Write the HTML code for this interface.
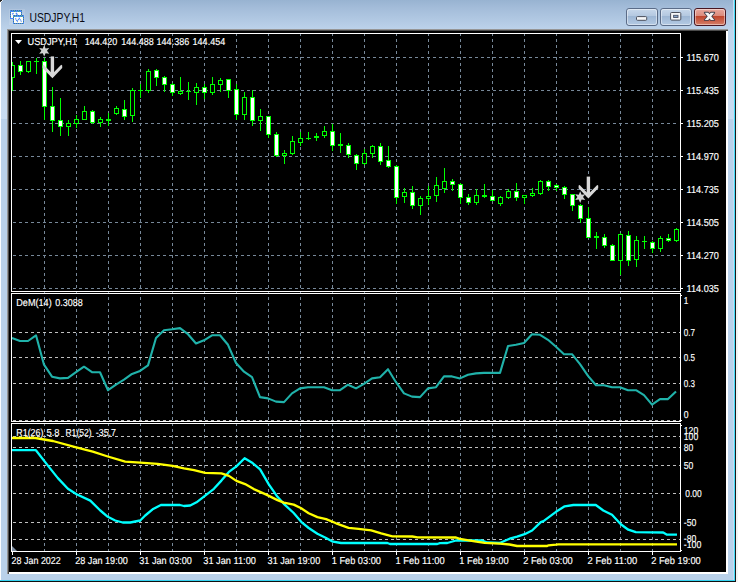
<!DOCTYPE html>
<html><head><meta charset="utf-8"><title>USDJPY,H1</title>
<style>html,body{margin:0;padding:0;background:#000;overflow:hidden}svg{display:block}text{font-family:"Liberation Sans",sans-serif}.t{font-size:10.1px;fill:#fff;stroke:#fff;stroke-width:0.15px;text-rendering:geometricPrecision}</style></head><body>
<svg width="738" height="582" viewBox="0 0 738 582">
<defs><linearGradient id="tb" x1="0" y1="0" x2="0" y2="1"><stop offset="0" stop-color="#98b3d1"/><stop offset="0.25" stop-color="#a3bcd9"/><stop offset="1" stop-color="#bdd3eb"/></linearGradient><linearGradient id="bmin" x1="0" y1="0" x2="0" y2="1"><stop offset="0" stop-color="#c9d9ec"/><stop offset="0.43" stop-color="#b4c8e0"/><stop offset="0.45" stop-color="#9db6d4"/><stop offset="1" stop-color="#b5cbe4"/></linearGradient><linearGradient id="bcl" x1="0" y1="0" x2="0" y2="1"><stop offset="0" stop-color="#e9aaa0"/><stop offset="0.43" stop-color="#db8b7c"/><stop offset="0.45" stop-color="#bf442b"/><stop offset="1" stop-color="#d6826c"/></linearGradient><linearGradient id="rb" x1="0" y1="0" x2="0" y2="1"><stop offset="0" stop-color="#bfd5ec"/><stop offset="1" stop-color="#c9dcf1"/></linearGradient></defs>
<g shape-rendering="crispEdges">
<rect x="0" y="0" width="738" height="582" fill="#b9d1ea"/>
<rect x="0" y="0" width="738" height="30" fill="url(#tb)"/>
<rect x="1" y="30" width="6" height="89" fill="url(#rb)"/>
<rect x="728" y="30" width="5" height="89" fill="url(#rb)"/>
<rect x="0" y="0" width="1" height="580" fill="#fbfdff"/>
<rect x="733" y="0" width="1" height="580" fill="#c6dcf2"/>
<rect x="734" y="0" width="1" height="581" fill="#45dcf8"/>
<rect x="735" y="0" width="1" height="582" fill="#1a1a1a"/>
<rect x="736" y="0" width="2" height="582" fill="#f4f4f4"/>
<rect x="0" y="580" width="735" height="1" fill="#35d2f0"/>
<rect x="0" y="581" width="736" height="1" fill="#101010"/>
<rect x="0" y="0" width="2" height="1" fill="#222"/>
<rect x="0" y="1" width="1" height="1" fill="#3a3a3a"/>
<rect x="1" y="1" width="1" height="1" fill="#e8eef6"/>
<rect x="2" y="0" width="1" height="1" fill="#dfe8f2"/>
<rect x="7" y="29" width="721" height="545" fill="#969696"/>
<rect x="8" y="30" width="720" height="544" fill="#4a4a4a"/>
<rect x="9" y="31" width="719" height="543" fill="#ffffff"/>
<rect x="9" y="31" width="717" height="541" fill="#000000"/>
</g>
<g shape-rendering="crispEdges" fill="none" stroke-width="1">
<line x1="44.5" y1="33" x2="44.5" y2="551" stroke="#778899" stroke-dasharray="3 3"/>
<line x1="76.5" y1="33" x2="76.5" y2="551" stroke="#778899" stroke-dasharray="3 3"/>
<line x1="108.5" y1="33" x2="108.5" y2="551" stroke="#778899" stroke-dasharray="3 3"/>
<line x1="140.5" y1="33" x2="140.5" y2="551" stroke="#778899" stroke-dasharray="3 3"/>
<line x1="172.5" y1="33" x2="172.5" y2="551" stroke="#778899" stroke-dasharray="3 3"/>
<line x1="204.5" y1="33" x2="204.5" y2="551" stroke="#778899" stroke-dasharray="3 3"/>
<line x1="236.5" y1="33" x2="236.5" y2="551" stroke="#778899" stroke-dasharray="3 3"/>
<line x1="268.5" y1="33" x2="268.5" y2="551" stroke="#778899" stroke-dasharray="3 3"/>
<line x1="300.5" y1="33" x2="300.5" y2="551" stroke="#778899" stroke-dasharray="3 3"/>
<line x1="332.5" y1="33" x2="332.5" y2="551" stroke="#778899" stroke-dasharray="3 3"/>
<line x1="364.5" y1="33" x2="364.5" y2="551" stroke="#778899" stroke-dasharray="3 3"/>
<line x1="396.5" y1="33" x2="396.5" y2="551" stroke="#778899" stroke-dasharray="3 3"/>
<line x1="428.5" y1="33" x2="428.5" y2="551" stroke="#778899" stroke-dasharray="3 3"/>
<line x1="460.5" y1="33" x2="460.5" y2="551" stroke="#778899" stroke-dasharray="3 3"/>
<line x1="492.5" y1="33" x2="492.5" y2="551" stroke="#778899" stroke-dasharray="3 3"/>
<line x1="524.5" y1="33" x2="524.5" y2="551" stroke="#778899" stroke-dasharray="3 3"/>
<line x1="556.5" y1="33" x2="556.5" y2="551" stroke="#778899" stroke-dasharray="3 3"/>
<line x1="588.5" y1="33" x2="588.5" y2="551" stroke="#778899" stroke-dasharray="3 3"/>
<line x1="620.5" y1="33" x2="620.5" y2="551" stroke="#778899" stroke-dasharray="3 3"/>
<line x1="652.5" y1="33" x2="652.5" y2="551" stroke="#778899" stroke-dasharray="3 3"/>
<line x1="13" y1="57.5" x2="679" y2="57.5" stroke="#778899" stroke-dasharray="3 3"/>
<line x1="13" y1="90.5" x2="679" y2="90.5" stroke="#778899" stroke-dasharray="3 3"/>
<line x1="13" y1="123.5" x2="679" y2="123.5" stroke="#778899" stroke-dasharray="3 3"/>
<line x1="13" y1="156.5" x2="679" y2="156.5" stroke="#778899" stroke-dasharray="3 3"/>
<line x1="13" y1="189.5" x2="679" y2="189.5" stroke="#778899" stroke-dasharray="3 3"/>
<line x1="13" y1="222.5" x2="679" y2="222.5" stroke="#778899" stroke-dasharray="3 3"/>
<line x1="13" y1="255.5" x2="679" y2="255.5" stroke="#778899" stroke-dasharray="3 3"/>
<line x1="13" y1="288.5" x2="679" y2="288.5" stroke="#778899" stroke-dasharray="3 3"/>
<line x1="13" y1="332.5" x2="680" y2="332.5" stroke="#c0c0c0" stroke-dasharray="3 3"/>
<line x1="13" y1="357.5" x2="680" y2="357.5" stroke="#c0c0c0" stroke-dasharray="3 3"/>
<line x1="13" y1="383.5" x2="680" y2="383.5" stroke="#c0c0c0" stroke-dasharray="3 3"/>
<line x1="13" y1="420.5" x2="680" y2="420.5" stroke="#c0c0c0" stroke-dasharray="3 3"/>
<line x1="13" y1="436.5" x2="680" y2="436.5" stroke="#c0c0c0" stroke-dasharray="3 3"/>
<line x1="13" y1="447.5" x2="680" y2="447.5" stroke="#c0c0c0" stroke-dasharray="3 3"/>
<line x1="13" y1="465.5" x2="680" y2="465.5" stroke="#c0c0c0" stroke-dasharray="3 3"/>
<line x1="13" y1="493.5" x2="680" y2="493.5" stroke="#c0c0c0" stroke-dasharray="3 3"/>
<line x1="13" y1="522.5" x2="680" y2="522.5" stroke="#c0c0c0" stroke-dasharray="3 3"/>
<line x1="13" y1="539.5" x2="680" y2="539.5" stroke="#c0c0c0" stroke-dasharray="3 3"/>
</g>
<g shape-rendering="crispEdges">
<clipPath id="cm"><rect x="12" y="34" width="668" height="257"/></clipPath>
<g clip-path="url(#cm)">
<rect x="12" y="62" width="1" height="29" fill="#00ff00"/>
<rect x="10" y="65" width="5" height="13" fill="#00ff00"/>
<rect x="11" y="66" width="3" height="11" fill="#000"/>
<rect x="20" y="61" width="1" height="14" fill="#00ff00"/>
<rect x="18" y="65" width="5" height="7" fill="#00ff00"/>
<rect x="19" y="66" width="3" height="5" fill="#fff"/>
<rect x="28" y="61" width="1" height="12" fill="#00ff00"/>
<rect x="26" y="61" width="5" height="11" fill="#00ff00"/>
<rect x="27" y="62" width="3" height="9" fill="#000"/>
<rect x="36" y="58" width="1" height="16" fill="#00ff00"/>
<rect x="34" y="61" width="5" height="1" fill="#00ff00"/>
<rect x="44" y="58" width="1" height="62" fill="#00ff00"/>
<rect x="42" y="61" width="5" height="46" fill="#00ff00"/>
<rect x="43" y="62" width="3" height="44" fill="#fff"/>
<rect x="52" y="87" width="1" height="45" fill="#00ff00"/>
<rect x="50" y="106" width="5" height="15" fill="#00ff00"/>
<rect x="51" y="107" width="3" height="13" fill="#fff"/>
<rect x="60" y="98" width="1" height="38" fill="#00ff00"/>
<rect x="58" y="120" width="5" height="7" fill="#00ff00"/>
<rect x="59" y="121" width="3" height="5" fill="#fff"/>
<rect x="68" y="120" width="1" height="16" fill="#00ff00"/>
<rect x="66" y="123" width="5" height="4" fill="#00ff00"/>
<rect x="67" y="124" width="3" height="2" fill="#000"/>
<rect x="76" y="115" width="1" height="13" fill="#00ff00"/>
<rect x="74" y="119" width="5" height="5" fill="#00ff00"/>
<rect x="75" y="120" width="3" height="3" fill="#000"/>
<rect x="84" y="106" width="1" height="14" fill="#00ff00"/>
<rect x="82" y="111" width="5" height="9" fill="#00ff00"/>
<rect x="83" y="112" width="3" height="7" fill="#000"/>
<rect x="92" y="110" width="1" height="14" fill="#00ff00"/>
<rect x="90" y="111" width="5" height="12" fill="#00ff00"/>
<rect x="91" y="112" width="3" height="10" fill="#fff"/>
<rect x="100" y="117" width="1" height="10" fill="#00ff00"/>
<rect x="98" y="119" width="5" height="4" fill="#00ff00"/>
<rect x="99" y="120" width="3" height="2" fill="#000"/>
<rect x="108" y="113" width="1" height="13" fill="#00ff00"/>
<rect x="106" y="119" width="5" height="2" fill="#00ff00"/>
<rect x="116" y="106" width="1" height="9" fill="#00ff00"/>
<rect x="114" y="108" width="5" height="6" fill="#00ff00"/>
<rect x="115" y="109" width="3" height="4" fill="#000"/>
<rect x="124" y="100" width="1" height="20" fill="#00ff00"/>
<rect x="122" y="109" width="5" height="8" fill="#00ff00"/>
<rect x="123" y="110" width="3" height="6" fill="#fff"/>
<rect x="132" y="88" width="1" height="34" fill="#00ff00"/>
<rect x="130" y="90" width="5" height="26" fill="#00ff00"/>
<rect x="131" y="91" width="3" height="24" fill="#000"/>
<rect x="140" y="84" width="1" height="14" fill="#00ff00"/>
<rect x="138" y="90" width="5" height="1" fill="#00ff00"/>
<rect x="148" y="69" width="1" height="24" fill="#00ff00"/>
<rect x="146" y="71" width="5" height="20" fill="#00ff00"/>
<rect x="147" y="72" width="3" height="18" fill="#000"/>
<rect x="156" y="69" width="1" height="17" fill="#00ff00"/>
<rect x="154" y="70" width="5" height="8" fill="#00ff00"/>
<rect x="155" y="71" width="3" height="6" fill="#fff"/>
<rect x="164" y="76" width="1" height="16" fill="#00ff00"/>
<rect x="162" y="77" width="5" height="8" fill="#00ff00"/>
<rect x="163" y="78" width="3" height="6" fill="#fff"/>
<rect x="172" y="83" width="1" height="13" fill="#00ff00"/>
<rect x="170" y="84" width="5" height="9" fill="#00ff00"/>
<rect x="171" y="85" width="3" height="7" fill="#fff"/>
<rect x="180" y="77" width="1" height="18" fill="#00ff00"/>
<rect x="178" y="91" width="5" height="3" fill="#00ff00"/>
<rect x="179" y="92" width="3" height="1" fill="#000"/>
<rect x="188" y="82" width="1" height="18" fill="#00ff00"/>
<rect x="186" y="91" width="5" height="1" fill="#00ff00"/>
<rect x="196" y="83" width="1" height="22" fill="#00ff00"/>
<rect x="194" y="87" width="5" height="6" fill="#00ff00"/>
<rect x="195" y="88" width="3" height="4" fill="#000"/>
<rect x="204" y="84" width="1" height="15" fill="#00ff00"/>
<rect x="202" y="87" width="5" height="6" fill="#00ff00"/>
<rect x="203" y="88" width="3" height="4" fill="#fff"/>
<rect x="212" y="77" width="1" height="18" fill="#00ff00"/>
<rect x="210" y="84" width="5" height="9" fill="#00ff00"/>
<rect x="211" y="85" width="3" height="7" fill="#000"/>
<rect x="220" y="78" width="1" height="14" fill="#00ff00"/>
<rect x="218" y="80" width="5" height="5" fill="#00ff00"/>
<rect x="219" y="81" width="3" height="3" fill="#000"/>
<rect x="228" y="79" width="1" height="19" fill="#00ff00"/>
<rect x="226" y="79" width="5" height="12" fill="#00ff00"/>
<rect x="227" y="80" width="3" height="10" fill="#fff"/>
<rect x="236" y="84" width="1" height="36" fill="#00ff00"/>
<rect x="234" y="89" width="5" height="26" fill="#00ff00"/>
<rect x="235" y="90" width="3" height="24" fill="#fff"/>
<rect x="244" y="92" width="1" height="28" fill="#00ff00"/>
<rect x="242" y="97" width="5" height="18" fill="#00ff00"/>
<rect x="243" y="98" width="3" height="16" fill="#000"/>
<rect x="252" y="90" width="1" height="36" fill="#00ff00"/>
<rect x="250" y="97" width="5" height="24" fill="#00ff00"/>
<rect x="251" y="98" width="3" height="22" fill="#fff"/>
<rect x="260" y="109" width="1" height="22" fill="#00ff00"/>
<rect x="258" y="116" width="5" height="5" fill="#00ff00"/>
<rect x="259" y="117" width="3" height="3" fill="#000"/>
<rect x="268" y="116" width="1" height="22" fill="#00ff00"/>
<rect x="266" y="116" width="5" height="19" fill="#00ff00"/>
<rect x="267" y="117" width="3" height="17" fill="#fff"/>
<rect x="276" y="132" width="1" height="25" fill="#00ff00"/>
<rect x="274" y="134" width="5" height="22" fill="#00ff00"/>
<rect x="275" y="135" width="3" height="20" fill="#fff"/>
<rect x="284" y="150" width="1" height="14" fill="#00ff00"/>
<rect x="282" y="153" width="5" height="3" fill="#00ff00"/>
<rect x="283" y="154" width="3" height="1" fill="#000"/>
<rect x="292" y="136" width="1" height="19" fill="#00ff00"/>
<rect x="290" y="141" width="5" height="13" fill="#00ff00"/>
<rect x="291" y="142" width="3" height="11" fill="#000"/>
<rect x="300" y="132" width="1" height="14" fill="#00ff00"/>
<rect x="298" y="138" width="5" height="5" fill="#00ff00"/>
<rect x="299" y="139" width="3" height="3" fill="#000"/>
<rect x="308" y="132" width="1" height="8" fill="#00ff00"/>
<rect x="306" y="138" width="5" height="1" fill="#00ff00"/>
<rect x="316" y="133" width="1" height="8" fill="#00ff00"/>
<rect x="314" y="136" width="5" height="2" fill="#00ff00"/>
<rect x="324" y="126" width="1" height="12" fill="#00ff00"/>
<rect x="322" y="131" width="5" height="5" fill="#00ff00"/>
<rect x="323" y="132" width="3" height="3" fill="#000"/>
<rect x="332" y="124" width="1" height="27" fill="#00ff00"/>
<rect x="330" y="131" width="5" height="15" fill="#00ff00"/>
<rect x="331" y="132" width="3" height="13" fill="#fff"/>
<rect x="340" y="133" width="1" height="20" fill="#00ff00"/>
<rect x="338" y="144" width="5" height="2" fill="#00ff00"/>
<rect x="348" y="143" width="1" height="15" fill="#00ff00"/>
<rect x="346" y="145" width="5" height="10" fill="#00ff00"/>
<rect x="347" y="146" width="3" height="8" fill="#fff"/>
<rect x="356" y="154" width="1" height="16" fill="#00ff00"/>
<rect x="354" y="155" width="5" height="9" fill="#00ff00"/>
<rect x="355" y="156" width="3" height="7" fill="#fff"/>
<rect x="364" y="149" width="1" height="16" fill="#00ff00"/>
<rect x="362" y="153" width="5" height="11" fill="#00ff00"/>
<rect x="363" y="154" width="3" height="9" fill="#000"/>
<rect x="372" y="145" width="1" height="13" fill="#00ff00"/>
<rect x="370" y="146" width="5" height="8" fill="#00ff00"/>
<rect x="371" y="147" width="3" height="6" fill="#000"/>
<rect x="380" y="143" width="1" height="22" fill="#00ff00"/>
<rect x="378" y="146" width="5" height="16" fill="#00ff00"/>
<rect x="379" y="147" width="3" height="14" fill="#fff"/>
<rect x="388" y="146" width="1" height="22" fill="#00ff00"/>
<rect x="386" y="160" width="5" height="7" fill="#00ff00"/>
<rect x="387" y="161" width="3" height="5" fill="#fff"/>
<rect x="396" y="165" width="1" height="39" fill="#00ff00"/>
<rect x="394" y="166" width="5" height="32" fill="#00ff00"/>
<rect x="395" y="167" width="3" height="30" fill="#fff"/>
<rect x="404" y="188" width="1" height="15" fill="#00ff00"/>
<rect x="402" y="192" width="5" height="5" fill="#00ff00"/>
<rect x="403" y="193" width="3" height="3" fill="#000"/>
<rect x="412" y="186" width="1" height="23" fill="#00ff00"/>
<rect x="410" y="192" width="5" height="14" fill="#00ff00"/>
<rect x="411" y="193" width="3" height="12" fill="#fff"/>
<rect x="420" y="196" width="1" height="19" fill="#00ff00"/>
<rect x="418" y="198" width="5" height="8" fill="#00ff00"/>
<rect x="419" y="199" width="3" height="6" fill="#000"/>
<rect x="428" y="186" width="1" height="19" fill="#00ff00"/>
<rect x="426" y="196" width="5" height="3" fill="#00ff00"/>
<rect x="427" y="197" width="3" height="1" fill="#000"/>
<rect x="436" y="177" width="1" height="25" fill="#00ff00"/>
<rect x="434" y="185" width="5" height="11" fill="#00ff00"/>
<rect x="435" y="186" width="3" height="9" fill="#000"/>
<rect x="444" y="168" width="1" height="25" fill="#00ff00"/>
<rect x="442" y="181" width="5" height="8" fill="#00ff00"/>
<rect x="443" y="182" width="3" height="6" fill="#000"/>
<rect x="452" y="179" width="1" height="12" fill="#00ff00"/>
<rect x="450" y="181" width="5" height="4" fill="#00ff00"/>
<rect x="451" y="182" width="3" height="2" fill="#fff"/>
<rect x="460" y="183" width="1" height="21" fill="#00ff00"/>
<rect x="458" y="184" width="5" height="14" fill="#00ff00"/>
<rect x="459" y="185" width="3" height="12" fill="#fff"/>
<rect x="468" y="194" width="1" height="11" fill="#00ff00"/>
<rect x="466" y="197" width="5" height="6" fill="#00ff00"/>
<rect x="467" y="198" width="3" height="4" fill="#fff"/>
<rect x="476" y="189" width="1" height="16" fill="#00ff00"/>
<rect x="474" y="195" width="5" height="8" fill="#00ff00"/>
<rect x="475" y="196" width="3" height="6" fill="#000"/>
<rect x="484" y="184" width="1" height="14" fill="#00ff00"/>
<rect x="482" y="195" width="5" height="2" fill="#00ff00"/>
<rect x="492" y="190" width="1" height="11" fill="#00ff00"/>
<rect x="490" y="196" width="5" height="5" fill="#00ff00"/>
<rect x="491" y="197" width="3" height="3" fill="#fff"/>
<rect x="500" y="196" width="1" height="10" fill="#00ff00"/>
<rect x="498" y="197" width="5" height="7" fill="#00ff00"/>
<rect x="499" y="198" width="3" height="5" fill="#000"/>
<rect x="508" y="189" width="1" height="10" fill="#00ff00"/>
<rect x="506" y="191" width="5" height="7" fill="#00ff00"/>
<rect x="507" y="192" width="3" height="5" fill="#000"/>
<rect x="516" y="183" width="1" height="18" fill="#00ff00"/>
<rect x="514" y="191" width="5" height="7" fill="#00ff00"/>
<rect x="515" y="192" width="3" height="5" fill="#fff"/>
<rect x="524" y="195" width="1" height="9" fill="#00ff00"/>
<rect x="522" y="195" width="5" height="3" fill="#00ff00"/>
<rect x="523" y="196" width="3" height="1" fill="#000"/>
<rect x="532" y="188" width="1" height="9" fill="#00ff00"/>
<rect x="530" y="193" width="5" height="3" fill="#00ff00"/>
<rect x="531" y="194" width="3" height="1" fill="#000"/>
<rect x="540" y="180" width="1" height="15" fill="#00ff00"/>
<rect x="538" y="181" width="5" height="13" fill="#00ff00"/>
<rect x="539" y="182" width="3" height="11" fill="#000"/>
<rect x="548" y="180" width="1" height="11" fill="#00ff00"/>
<rect x="546" y="181" width="5" height="6" fill="#00ff00"/>
<rect x="547" y="182" width="3" height="4" fill="#fff"/>
<rect x="556" y="184" width="1" height="7" fill="#00ff00"/>
<rect x="554" y="185" width="5" height="3" fill="#00ff00"/>
<rect x="555" y="186" width="3" height="1" fill="#fff"/>
<rect x="564" y="186" width="1" height="13" fill="#00ff00"/>
<rect x="562" y="187" width="5" height="8" fill="#00ff00"/>
<rect x="563" y="188" width="3" height="6" fill="#fff"/>
<rect x="572" y="194" width="1" height="17" fill="#00ff00"/>
<rect x="570" y="194" width="5" height="12" fill="#00ff00"/>
<rect x="571" y="195" width="3" height="10" fill="#fff"/>
<rect x="580" y="204" width="1" height="19" fill="#00ff00"/>
<rect x="578" y="205" width="5" height="14" fill="#00ff00"/>
<rect x="579" y="206" width="3" height="12" fill="#fff"/>
<rect x="588" y="207" width="1" height="31" fill="#00ff00"/>
<rect x="586" y="218" width="5" height="20" fill="#00ff00"/>
<rect x="587" y="219" width="3" height="18" fill="#fff"/>
<rect x="596" y="232" width="1" height="17" fill="#00ff00"/>
<rect x="594" y="236" width="5" height="2" fill="#00ff00"/>
<rect x="604" y="234" width="1" height="14" fill="#00ff00"/>
<rect x="602" y="237" width="5" height="9" fill="#00ff00"/>
<rect x="603" y="238" width="3" height="7" fill="#fff"/>
<rect x="612" y="244" width="1" height="17" fill="#00ff00"/>
<rect x="610" y="245" width="5" height="16" fill="#00ff00"/>
<rect x="611" y="246" width="3" height="14" fill="#fff"/>
<rect x="620" y="233" width="1" height="42" fill="#00ff00"/>
<rect x="618" y="234" width="5" height="27" fill="#00ff00"/>
<rect x="619" y="235" width="3" height="25" fill="#000"/>
<rect x="628" y="231" width="1" height="35" fill="#00ff00"/>
<rect x="626" y="235" width="5" height="26" fill="#00ff00"/>
<rect x="627" y="236" width="3" height="24" fill="#fff"/>
<rect x="636" y="236" width="1" height="31" fill="#00ff00"/>
<rect x="634" y="240" width="5" height="20" fill="#00ff00"/>
<rect x="635" y="241" width="3" height="18" fill="#000"/>
<rect x="644" y="236" width="1" height="13" fill="#00ff00"/>
<rect x="642" y="241" width="5" height="1" fill="#00ff00"/>
<rect x="652" y="241" width="1" height="12" fill="#00ff00"/>
<rect x="650" y="242" width="5" height="7" fill="#00ff00"/>
<rect x="651" y="243" width="3" height="5" fill="#fff"/>
<rect x="660" y="236" width="1" height="16" fill="#00ff00"/>
<rect x="658" y="238" width="5" height="11" fill="#00ff00"/>
<rect x="659" y="239" width="3" height="9" fill="#000"/>
<rect x="668" y="234" width="1" height="8" fill="#00ff00"/>
<rect x="666" y="238" width="5" height="3" fill="#00ff00"/>
<rect x="667" y="239" width="3" height="1" fill="#fff"/>
<rect x="676" y="228" width="1" height="14" fill="#00ff00"/>
<rect x="674" y="229" width="5" height="12" fill="#00ff00"/>
<rect x="675" y="230" width="3" height="10" fill="#000"/>
</g></g>
<line x1="52.4" y1="56.4" x2="52.4" y2="76.3" stroke="#d8d8d8" stroke-width="3.4"/><polygon points="42.60,65.40 43.60,64.80 52.40,73.70 61.20,64.80 62.20,65.40 62.20,68.00 52.40,78.30 42.60,68.00" fill="#d8d8d8"/>
<line x1="588.4" y1="176.6" x2="588.4" y2="196.5" stroke="#d8d8d8" stroke-width="3.4"/><polygon points="578.60,185.60 579.60,185.00 588.40,193.90 597.20,185.00 598.20,185.60 598.20,188.20 588.40,198.50 578.60,188.20" fill="#d8d8d8"/>
<polygon points="44.20,45.00 45.60,48.38 49.22,47.90 47.00,50.80 49.22,53.70 45.60,53.22 44.20,56.60 42.80,53.22 39.18,53.70 41.40,50.80 39.18,47.90 42.80,48.38" fill="#d0d0d0"/>
<polygon points="580.20,191.30 581.60,194.68 585.22,194.20 583.00,197.10 585.22,200.00 581.60,199.52 580.20,202.90 578.80,199.52 575.18,200.00 577.40,197.10 575.18,194.20 578.80,194.68" fill="#d0d0d0"/>
<polyline points="12,338.0 20,341.0 28,341.0 36,335.29999999999995 44,364.7 52,376.7 60,378.4 68,377.9 76,372.2 84,366.7 92,372.2 100,372.2 108,390.2 116,384.7 124,379.7 132,373.9 140,370.9 148,365.4 156,338.0 164,330.29999999999995 172,329.29999999999995 180,328.09999999999997 188,334.2 196,343.5 204,340.29999999999995 212,335.29999999999995 220,335.29999999999995 228,344.79999999999995 236,363.0 244,371.7 252,377.2 260,397.09999999999997 268,398.4 276,401.59999999999997 284,402.09999999999997 292,393.4 300,388.4 308,387.2 316,387.2 324,387.2 332,390.2 340,390.2 348,384.7 356,388.4 364,383.79999999999995 372,378.4 380,377.2 388,369.2 396,382.2 404,393.4 412,396.59999999999997 420,397.09999999999997 428,388.4 436,387.2 444,376.4 452,376.4 460,378.4 468,374.7 476,373.4 484,372.9 492,372.9 500,372.9 508,346.0 516,344.79999999999995 524,343.0 532,334.29999999999995 540,334.79999999999995 548,339.79999999999995 556,346.79999999999995 564,354.2 572,354.2 580,364.2 588,375.9 596,385.2 604,385.2 612,387.2 620,387.2 628,390.2 636,390.2 644,395.09999999999997 652,404.59999999999997 660,399.09999999999997 668,399.09999999999997 676,391.4" fill="none" stroke="#20b2aa" stroke-width="2.1" stroke-linejoin="round"/>
<polyline points="12,450.2 35.9,450.2 47.9,465.6 57.9,478.1 67.9,488.8 76.6,494.3 90.3,500.6 100.3,510.5 107.8,516.8 115.2,520.5 122.7,522.5 130.2,522.5 140.2,520.5 145.2,515.5 152.6,509.3 161.4,504.8 180,505 184,506 190.2,505.5 196.5,502.3 205.2,495.6 213.9,488.8 221.4,480.6 228.9,471.9 236.4,466.4 244.6,458.2 252.6,463.1 260.1,469.4 268.8,484.3 277.5,496.8 283.8,503.8 293.7,513 301.2,521.8 308.7,528 317.4,533.7 326.1,538 332.9,541.7 341.1,543 387.4,543 390,544 437.3,544 439.8,543.2 447.3,543 456,540.5 482.2,540.5 487.2,542.5 499.7,543 509.6,538.7 517.1,536.7 524.6,534.2 532.1,530.5 540.8,522.2 543.5,521.2 556,511.8 564.7,506.3 573.4,505 595.8,505 603.3,510.5 612,514.8 620.8,524.2 628.3,529.7 635.8,532.2 663.2,532.5 667,534.7 677,534.7" fill="none" stroke="#00ffff" stroke-width="2.3" stroke-linejoin="round"/>
<polyline points="12,438.0 35.4,438.0 52.9,441.0 75.3,447.2 92.8,451.7 107.8,456.5 125.2,461.7 140.2,462.7 157.6,463.90000000000003 172.6,465.90000000000003 184,468.40000000000003 194,470.2 205.2,472.90000000000003 221.4,473.40000000000003 228.9,475.90000000000003 236.4,480.90000000000003 245.1,484.1 253.8,489.1 266.3,494.6 277.5,500.1 283.8,502.6 293.7,504.6 301.2,508.3 308.7,513.3 317.4,517.0999999999999 326.1,519.0999999999999 336.1,523.3 348.6,527.8 358.6,528.8 371.2,530.3 381.2,533.3 392.4,536.3 412.4,536.5 417.4,537.3 456,537.5 459.8,538.8 474.7,541.3 484.7,542.8 499.7,543.6999999999999 509.6,544.5 517.1,546.0 547.2,546.0 548.5,545.3 556,544.6999999999999 558.4,544.3 677,544.3" fill="none" stroke="#ffff00" stroke-width="2.3" stroke-linejoin="round"/>
<g shape-rendering="crispEdges" fill="none" stroke="#fff" stroke-width="1">
<rect x="11.5" y="33.5" width="669" height="258"/>
<rect x="11.5" y="293.5" width="669" height="128"/>
<rect x="11.5" y="423.5" width="669" height="128"/>
</g>
<polygon points="12,546 12,551 17,551" fill="#7f8fa3"/>
<g shape-rendering="crispEdges" fill="#fff">
<rect x="681" y="57" width="2" height="1" fill="#fff"/>
<rect x="681" y="90" width="2" height="1" fill="#fff"/>
<rect x="681" y="123" width="2" height="1" fill="#fff"/>
<rect x="681" y="156" width="2" height="1" fill="#fff"/>
<rect x="681" y="189" width="2" height="1" fill="#fff"/>
<rect x="681" y="222" width="2" height="1" fill="#fff"/>
<rect x="681" y="255" width="2" height="1" fill="#fff"/>
<rect x="681" y="288" width="2" height="1" fill="#fff"/>
<rect x="12" y="552" width="1" height="3" fill="#fff"/>
<rect x="76" y="552" width="1" height="3" fill="#fff"/>
<rect x="140" y="552" width="1" height="3" fill="#fff"/>
<rect x="204" y="552" width="1" height="3" fill="#fff"/>
<rect x="268" y="552" width="1" height="3" fill="#fff"/>
<rect x="332" y="552" width="1" height="3" fill="#fff"/>
<rect x="396" y="552" width="1" height="3" fill="#fff"/>
<rect x="460" y="552" width="1" height="3" fill="#fff"/>
<rect x="524" y="552" width="1" height="3" fill="#fff"/>
<rect x="588" y="552" width="1" height="3" fill="#fff"/>
<rect x="652" y="552" width="1" height="3" fill="#fff"/>
<rect x="681" y="295" width="1" height="1" fill="#fff"/>
<rect x="681" y="420" width="1" height="1" fill="#fff"/>
<rect x="681" y="425" width="1" height="1" fill="#fff"/>
<rect x="681" y="550" width="1" height="1" fill="#fff"/>
</g>
<text class="t" x="686.5" y="61" textLength="32.4" lengthAdjust="spacingAndGlyphs">115.670</text>
<text class="t" x="686.5" y="94" textLength="32.4" lengthAdjust="spacingAndGlyphs">115.435</text>
<text class="t" x="686.5" y="127" textLength="32.4" lengthAdjust="spacingAndGlyphs">115.205</text>
<text class="t" x="686.5" y="160" textLength="32.4" lengthAdjust="spacingAndGlyphs">114.970</text>
<text class="t" x="686.5" y="193" textLength="32.4" lengthAdjust="spacingAndGlyphs">114.735</text>
<text class="t" x="686.5" y="226" textLength="32.4" lengthAdjust="spacingAndGlyphs">114.505</text>
<text class="t" x="686.5" y="259" textLength="32.4" lengthAdjust="spacingAndGlyphs">114.270</text>
<text class="t" x="686.5" y="292" textLength="32.4" lengthAdjust="spacingAndGlyphs">114.035</text>
<text class="t" x="683.8" y="303.6" textLength="4.6" lengthAdjust="spacingAndGlyphs">1</text>
<text class="t" x="683.8" y="336" textLength="11.2" lengthAdjust="spacingAndGlyphs">0.7</text>
<text class="t" x="683.8" y="361" textLength="11.2" lengthAdjust="spacingAndGlyphs">0.5</text>
<text class="t" x="683.8" y="386.6" textLength="11.2" lengthAdjust="spacingAndGlyphs">0.3</text>
<text class="t" x="683.8" y="418" textLength="4.8" lengthAdjust="spacingAndGlyphs">0</text>
<text class="t" x="683.8" y="434" textLength="14.4" lengthAdjust="spacingAndGlyphs">120</text>
<text class="t" x="683.8" y="440" textLength="14.4" lengthAdjust="spacingAndGlyphs">100</text>
<text class="t" x="683.8" y="451" textLength="9.6" lengthAdjust="spacingAndGlyphs">80</text>
<text class="t" x="683.8" y="469" textLength="9.6" lengthAdjust="spacingAndGlyphs">50</text>
<text class="t" x="685.3" y="497" textLength="16.4" lengthAdjust="spacingAndGlyphs">0.00</text>
<text class="t" x="683.8" y="526" textLength="12.6" lengthAdjust="spacingAndGlyphs">-50</text>
<text class="t" x="683.8" y="542.4" textLength="12.6" lengthAdjust="spacingAndGlyphs">-80</text>
<text class="t" x="683.8" y="548.2" textLength="17.6" lengthAdjust="spacingAndGlyphs">-100</text>
<text class="t" x="11.6" y="564" textLength="49.2" lengthAdjust="spacingAndGlyphs">28 Jan 2022</text>
<text class="t" x="75.2" y="564" textLength="52.6" lengthAdjust="spacingAndGlyphs">28 Jan 19:00</text>
<text class="t" x="139.3" y="564" textLength="52.6" lengthAdjust="spacingAndGlyphs">31 Jan 03:00</text>
<text class="t" x="203.3" y="564" textLength="52.6" lengthAdjust="spacingAndGlyphs">31 Jan 11:00</text>
<text class="t" x="267.6" y="564" textLength="52.6" lengthAdjust="spacingAndGlyphs">31 Jan 19:00</text>
<text class="t" x="331.7" y="564" textLength="49.3" lengthAdjust="spacingAndGlyphs">1 Feb 03:00</text>
<text class="t" x="395.4" y="564" textLength="49.3" lengthAdjust="spacingAndGlyphs">1 Feb 11:00</text>
<text class="t" x="459.3" y="564" textLength="49.3" lengthAdjust="spacingAndGlyphs">1 Feb 19:00</text>
<text class="t" x="523.2" y="564" textLength="49.6" lengthAdjust="spacingAndGlyphs">2 Feb 03:00</text>
<text class="t" x="587.6" y="564" textLength="49.6" lengthAdjust="spacingAndGlyphs">2 Feb 11:00</text>
<text class="t" x="651.2" y="564" textLength="49.6" lengthAdjust="spacingAndGlyphs">2 Feb 19:00</text>
<polygon points="15,40 22,40 18.5,44" fill="#fff"/>
<text class="t" x="27.6" y="45" textLength="49.4" lengthAdjust="spacingAndGlyphs">USDJPY,H1</text>
<text class="t" x="84.8" y="45" textLength="32.6" lengthAdjust="spacingAndGlyphs">144.420</text>
<text class="t" x="121.2" y="45" textLength="32.6" lengthAdjust="spacingAndGlyphs">144.488</text>
<text class="t" x="156.6" y="45" textLength="32.6" lengthAdjust="spacingAndGlyphs">144.386</text>
<text class="t" x="192.6" y="45" textLength="32.6" lengthAdjust="spacingAndGlyphs">144.454</text>
<text class="t" x="16.3" y="306" textLength="35.4" lengthAdjust="spacingAndGlyphs">DeM(14)</text>
<text class="t" x="55.3" y="306" textLength="27.5" lengthAdjust="spacingAndGlyphs">0.3088</text>
<text class="t" x="16.3" y="436" textLength="27.1" lengthAdjust="spacingAndGlyphs">R1(26)</text>
<text class="t" x="46.4" y="436" textLength="13.1" lengthAdjust="spacingAndGlyphs">5.8</text>
<text class="t" x="65.4" y="436" textLength="26.3" lengthAdjust="spacingAndGlyphs">R1(52)</text>
<text class="t" x="95.8" y="436" textLength="20.1" lengthAdjust="spacingAndGlyphs">-35.7</text>
<text x="29.5" y="21.9" font-size="12.6" fill="#0a0a14" textLength="55.6" lengthAdjust="spacingAndGlyphs">USDJPY,H1</text>
<rect x="9" y="9" width="16" height="16" fill="#ffffff" fill-opacity="0.12"/>
<g shape-rendering="crispEdges">
<rect x="10" y="10" width="12" height="9" fill="#4a86f7"/>
<rect x="11" y="12" width="10" height="6" fill="#fffef6"/>
<rect x="13" y="15" width="11" height="9" fill="#4a86f7"/>
<rect x="14" y="17" width="9" height="6" fill="#fffef6"/>
<rect x="11" y="10" width="1" height="1" fill="#3f7f8c"/>
<rect x="13" y="10" width="1" height="1" fill="#3f7f8c"/>
<rect x="15" y="10" width="1" height="1" fill="#3f7f8c"/>
<rect x="17" y="10" width="1" height="1" fill="#3f7f8c"/>
<rect x="19" y="10" width="1" height="1" fill="#3f7f8c"/>
<rect x="21" y="10" width="1" height="1" fill="#3f7f8c"/>
<rect x="10" y="12" width="1" height="1" fill="#3f7f8c"/>
<rect x="21" y="12" width="1" height="1" fill="#3f7f8c"/>
<rect x="10" y="14" width="1" height="1" fill="#3f7f8c"/>
<rect x="21" y="14" width="1" height="1" fill="#3f7f8c"/>
<rect x="10" y="16" width="1" height="1" fill="#3f7f8c"/>
<rect x="21" y="16" width="1" height="1" fill="#3f7f8c"/>
<rect x="14" y="15" width="1" height="1" fill="#3f7f8c"/>
<rect x="14" y="23" width="1" height="1" fill="#3f7f8c"/>
<rect x="16" y="15" width="1" height="1" fill="#3f7f8c"/>
<rect x="16" y="23" width="1" height="1" fill="#3f7f8c"/>
<rect x="18" y="15" width="1" height="1" fill="#3f7f8c"/>
<rect x="18" y="23" width="1" height="1" fill="#3f7f8c"/>
<rect x="20" y="15" width="1" height="1" fill="#3f7f8c"/>
<rect x="20" y="23" width="1" height="1" fill="#3f7f8c"/>
<rect x="22" y="15" width="1" height="1" fill="#3f7f8c"/>
<rect x="22" y="23" width="1" height="1" fill="#3f7f8c"/>
<rect x="13" y="17" width="1" height="1" fill="#3f7f8c"/>
<rect x="23" y="17" width="1" height="1" fill="#3f7f8c"/>
<rect x="13" y="19" width="1" height="1" fill="#3f7f8c"/>
<rect x="23" y="19" width="1" height="1" fill="#3f7f8c"/>
<rect x="13" y="21" width="1" height="1" fill="#3f7f8c"/>
<rect x="23" y="21" width="1" height="1" fill="#3f7f8c"/>
<rect x="14" y="11" width="1" height="1" fill="#45c070"/>
<rect x="18" y="11" width="1" height="1" fill="#45c070"/>
<rect x="17" y="16" width="1" height="1" fill="#40c8e8"/>
<rect x="21" y="16" width="1" height="1" fill="#45c070"/>
<rect x="14" y="16" width="1" height="1" fill="#45c070"/>
</g>
<polyline points="12.2,14.2 13.6,13.3" fill="none" stroke="#4a86f7" stroke-width="1.3"/>
<polyline points="16,12.8 17.4,14.8" fill="none" stroke="#4a86f7" stroke-width="1.3"/>
<polyline points="15.4,18.4 17.3,21.4 19.2,18.3 21.5,21.6" fill="none" stroke="#4a86f7" stroke-width="1.1" stroke-dasharray="1.2 0.5"/>
<rect x="626.5" y="8.5" width="31" height="17" rx="2.5" ry="2.5" fill="url(#bmin)" stroke="#5b6c88" stroke-width="1"/><rect x="627.5" y="9.5" width="29" height="15" rx="1.8" ry="1.8" fill="none" stroke="#ffffff" stroke-opacity="0.45" stroke-width="1"/>
<rect x="660.5" y="8.5" width="31" height="17" rx="2.5" ry="2.5" fill="url(#bmin)" stroke="#5b6c88" stroke-width="1"/><rect x="661.5" y="9.5" width="29" height="15" rx="1.8" ry="1.8" fill="none" stroke="#ffffff" stroke-opacity="0.45" stroke-width="1"/>
<rect x="694.5" y="8.5" width="31" height="17" rx="2.5" ry="2.5" fill="url(#bcl)" stroke="#471622" stroke-width="1"/><rect x="695.5" y="9.5" width="29" height="15" rx="1.8" ry="1.8" fill="none" stroke="#ffffff" stroke-opacity="0.45" stroke-width="1"/>
<rect x="636.5" y="16.6" width="10.2" height="3.7" rx="1" fill="#f6f7f9" stroke="#4a4f5c" stroke-width="1"/>
<rect x="670.6" y="12.5" width="10.2" height="7.6" rx="1" fill="#f6f7f9" stroke="#4a4f5c" stroke-width="1"/>
<rect x="673.6" y="15.3" width="4.4" height="2.2" fill="#86a3c8" stroke="#4a5166" stroke-width="0.9"/>
<g fill="#3e3e4a" stroke="#3e3e4a" stroke-width="1.7" stroke-linejoin="round"><polygon points="704.7,12.7 708.2,12.7 714.3,20 710.8,20"/><polygon points="710.8,12.7 714.3,12.7 708.2,20 704.7,20"/></g>
<g fill="#f7f7f7"><polygon points="704.7,12.7 708.2,12.7 714.3,20 710.8,20"/><polygon points="710.8,12.7 714.3,12.7 708.2,20 704.7,20"/></g>
</svg></body></html>
